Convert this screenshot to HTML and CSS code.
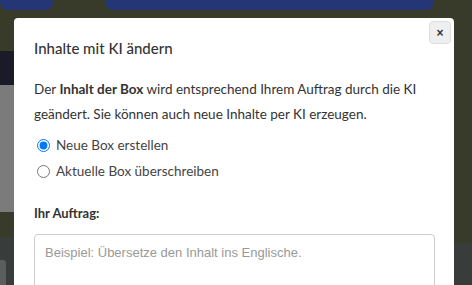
FILE: index.html
```html
<!DOCTYPE html>
<html lang="de">
<head>
    <meta charset="UTF-8">
    <meta name="viewport" content="width=device-width, initial-scale=1.0">
    <title>Inhalte mit KI ändern</title>
    <link rel="stylesheet" href="styles.css">
</head>
<body>
    <div class="backdrop">
        <div class="top-bars">
            <div class="bar bar-left"></div>
            <div class="bar bar-right"></div>
        </div>
        <div class="side-left">
            <div class="strip strip-navy"></div>
            <div class="strip strip-gray"></div>
            <div class="strip strip-olive"></div>
            <div class="strip strip-slate"><div class="slate-box"></div></div>
        </div>
        <div class="side-right">
            <div class="strip strip-olive-long"></div>
            <div class="strip strip-slate"></div>
        </div>
    </div>

    <div class="modal">
        <button class="close-btn" type="button">&times;</button>
        <h2 class="modal-title">Inhalte mit KI ändern</h2>
        <p class="modal-text">Der <strong>Inhalt der Box</strong> wird entsprechend Ihrem Auftrag durch die KI geändert. Sie können auch neue Inhalte per KI erzeugen.</p>
        <div class="options">
            <label class="option"><input type="radio" name="mode" checked> Neue Box erstellen</label>
            <label class="option"><input type="radio" name="mode"> Aktuelle Box überschreiben</label>
        </div>
        <label class="field-label" for="prompt">Ihr Auftrag:</label>
        <textarea id="prompt" placeholder="Beispiel: Übersetze den Inhalt ins Englische."></textarea>
    </div>
</body>
</html>
```

FILE: styles.css
```css
body {
    margin: 0;
    width: 472px;
    height: 285px;
    overflow: hidden;
    background-color: #383a2a;
    font-family: 'Lato', 'Open Sans', sans-serif;
    color: #333;
    position: relative;
}
.backdrop {
    position: absolute;
    inset: 0;
}
.top-bars {
    display: flex;
    height: 10px;
}
.bar {
    background-color: #253677;
    border-radius: 0 0 8px 8px;
}
.bar-left {
    width: 53px;
}
.bar-right {
    width: 329px;
    margin-left: 52px;
}
.side-left {
    position: absolute;
    left: 0;
    top: 51px;
    width: 14px;
    display: flex;
    flex-direction: column;
}
.strip-navy {
    height: 34px;
    background-color: #1a1a28;
}
.strip-gray {
    height: 127px;
    background-color: #7b7b7b;
}
.strip-olive {
    height: 25px;
}
.strip-slate {
    height: 48px;
    background-color: #383c3b;
    position: relative;
}
.slate-box {
    position: absolute;
    top: 23px;
    left: 0;
    width: 6px;
    height: 30px;
    background-color: #5a5e5d;
    border-radius: 0 3px 0 0;
}
.side-right {
    position: absolute;
    left: 454px;
    top: 0;
    width: 18px;
    height: 285px;
    display: flex;
    flex-direction: column;
}
.strip-olive-long {
    height: 243px;
}
.side-right .strip-slate {
    flex: 1;
}
.modal {
    position: absolute;
    left: 14px;
    top: 18px;
    width: 440px;
    height: 267px;
    overflow: hidden;
    box-sizing: border-box;
    background-color: #fff;
    border-radius: 4px 4px 0 0;
    padding: 20px 19px 0 20px;
}
.close-btn {
    position: absolute;
    top: 3px;
    right: 3px;
    width: 22px;
    height: 23px;
    padding: 0;
    background-color: #efefef;
    border: 1px solid #ddd;
    border-radius: 4px;
    font-family: 'Liberation Sans', sans-serif;
    font-size: 12px;
    font-weight: bold;
    color: #333;
    line-height: 20px;
}
.modal-title {
    margin: 0 0 19px;
    font-size: 15px;
    font-weight: 500;
    line-height: 20px;
}
.modal-text {
    margin: 0 0 8px;
    font-size: 13.5px;
    line-height: 25px;
}
.modal-text strong {
    font-weight: bold;
}
.options {
    display: flex;
    flex-direction: column;
    gap: 6px;
    margin-bottom: 24px;
}
.option {
    display: flex;
    align-items: center;
    gap: 6px;
    font-size: 13.5px;
    color: #444;
    line-height: 20px;
}
.option input {
    margin: 0 0 0 3px;
    width: 13px;
    height: 13px;
}
.field-label {
    display: block;
    font-size: 13px;
    font-weight: bold;
    margin-bottom: 13px;
}
textarea {
    display: block;
    width: 401px;
    height: 80px;
    box-sizing: border-box;
    border: 1px solid #ccc;
    border-radius: 4px;
    padding: 10px 10px;
    font-family: 'Liberation Sans', Arial, sans-serif;
    font-size: 13px;
    resize: none;
}
textarea::placeholder {
    color: #999;
}
```
